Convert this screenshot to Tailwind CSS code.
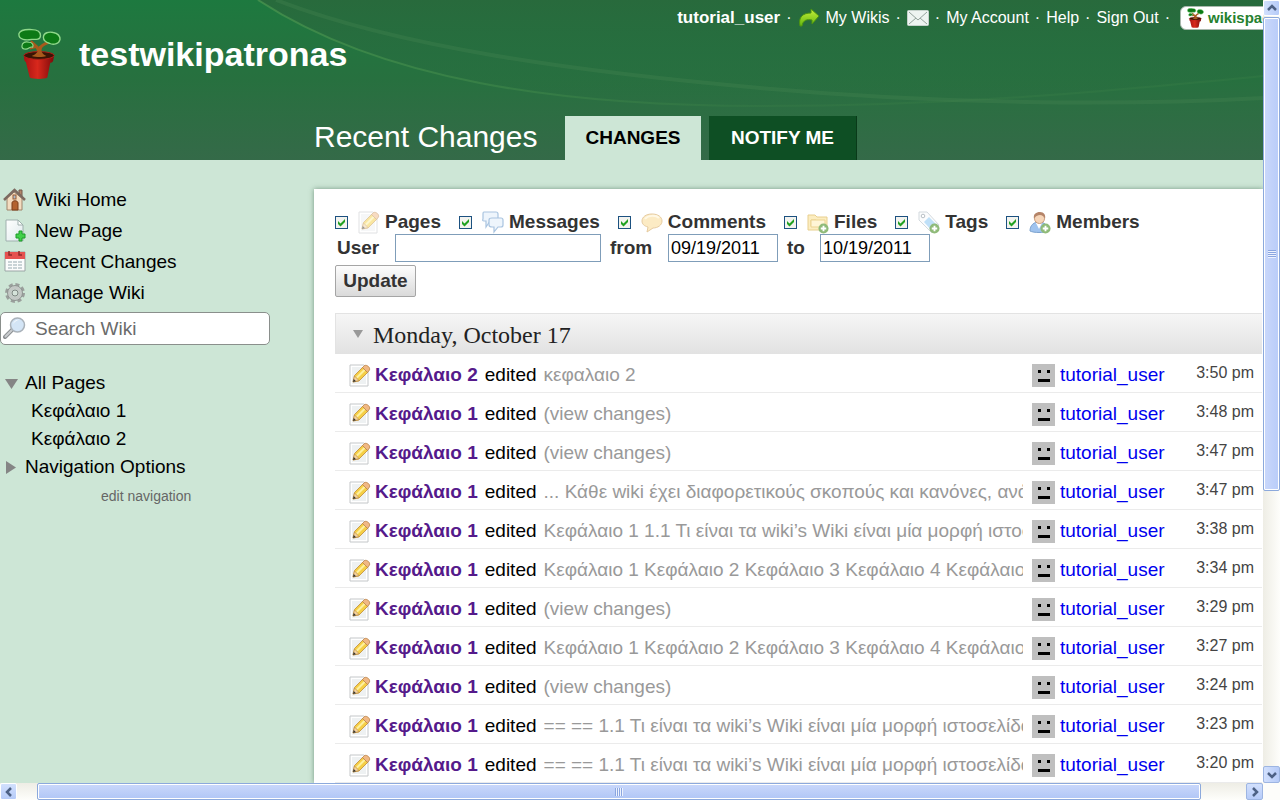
<!DOCTYPE html>
<html lang="en">
<head>
<meta charset="utf-8">
<meta name="viewport" content="width=device-width, initial-scale=1">
<title>testwikipatronas - Recent Changes</title>
<script src="https://cdn.jsdelivr.net/npm/@tailwindcss/browser@4"></script>
</head>
<body class="relative h-screen overflow-hidden bg-[#cde6d6] font-['Liberation_Sans',Arial,sans-serif] text-[19px] leading-6 text-black">

<svg class="absolute h-0 w-0" aria-hidden="true">
  <defs>
    <linearGradient id="pot" x1="0" x2="1"><stop offset="0" stop-color="#a81212"/><stop offset=".45" stop-color="#d8281c"/><stop offset="1" stop-color="#7c0a0a"/></linearGradient>
    <linearGradient id="sheet" x1="0" y1="0" x2="1" y2="1"><stop offset="0" stop-color="#fff"/><stop offset="1" stop-color="#dfe9ec"/></linearGradient>
    <linearGradient id="arrow" x1="0" y1="0" x2="0" y2="1"><stop offset="0" stop-color="#c6ee3a"/><stop offset="1" stop-color="#63b80f"/></linearGradient>
  </defs>
  <symbol id="plant" viewBox="0 0 44 52">
    <path d="M21 27c1-6-1-8-8-14M22 26c0-6 1-9 9-12M20 18l-8 2" fill="none" stroke="#a85a1c" stroke-width="3"/>
    <path d="M1 5c2-5 9-4 13-4 5 0 9 2 9 6 0 5-6 4-9 4-5 1-14 1-13-6z" fill="#0c7a16" stroke="#8fd88a" stroke-width="1.4"/>
    <path d="M26 9c0-5 6-6 10-5 5 1 7 4 7 7-1 5-7 6-11 4-3-1-6-3-6-6z" fill="#0c7a16" stroke="#8fd88a" stroke-width="1.4"/>
    <path d="M4 18c0-4 4-5 7-4 4 0 5 3 4 5-3-1-4 2-7 2-2 0-4-1-4-3z" fill="#0c7a16" stroke="#8fd88a" stroke-width="1.2"/>
    <path d="M6 27c4 4 27 4 31 0l-1 6c-1 2-2 2-3 2l-3 15c-3 2-14 2-18 0L8 34c-1 0-2-2-2-7z" fill="url(#pot)"/>
    <ellipse cx="21.500" cy="27.500" rx="15.500" ry="4" fill="#3a1505" stroke="#b02018"/>
    <path d="M21 18c0 6-2 8-7 10 4 1 10 2 15 0-4-2-6-4-5-11z" fill="#a85a1c"/>
  </symbol>
  <symbol id="pencil-page" viewBox="0 0 22 23">
    <path d="M1 1h14l4 4v17H1z" fill="#fff" stroke="#c4c7c9"/>
    <path d="M3 3h11l3 3v14H3z" fill="#eef1f2"/>
    <path d="m4 18 1.500-6.500L14 3l5 5-9 9z" fill="#f5cf45" stroke="#c08a35" stroke-width=".8"/>
    <path d="m7 13 8.500-8.500L17 6l-8.500 8.500z" fill="#fdf0a0"/>
    <path d="m4 18 1.500-6L10 16.500z" fill="#f3d2a0" stroke="#b98a45" stroke-width=".6"/>
    <path d="m13.500 3.500 2-2c2.500-1 6 2 5 4.500l-2 2.500z" fill="#f0b884" stroke="#b98045" stroke-width=".8"/>
    <path d="m4 18 .7-3 2.300 2.200z" fill="#333"/>
  </symbol>
  <symbol id="plus" viewBox="0 0 12 12"><circle cx="6" cy="6" r="5.500" fill="#8fba78"/><path d="M6 3v6M3 6h6" stroke="#fff" stroke-width="2"/></symbol>
  <symbol id="tick" viewBox="0 0 13 13"><path d="M3 5v3l2.500 2.500L10 6V3L5.500 7.500z" fill="#21a121"/></symbol>
</svg>

<div class="flex h-full flex-col">
 <div class="flex min-h-0 flex-1">
  <div class="flex min-w-0 flex-1 flex-col overflow-hidden">

   <header class="relative flex h-40 shrink-0 flex-col justify-between overflow-hidden bg-linear-to-b from-[#1d793f] via-[#27703f] to-[#346a48] text-white">
    <svg class="absolute inset-0 h-full w-full" viewBox="0 0 1263 160" preserveAspectRatio="none" aria-hidden="true">
      <defs>
        <linearGradient id="shade" x1="0" x2="0" y1="0" y2="1"><stop offset="0" stop-color="#286a3c"/><stop offset=".5" stop-color="#276d3f" stop-opacity=".8"/><stop offset="1" stop-color="#2b6d41" stop-opacity="0"/></linearGradient>
        <linearGradient id="rim" x1="0" x2="1"><stop offset="0" stop-color="#4c9850" stop-opacity=".7"/><stop offset=".5" stop-color="#3b8047" stop-opacity=".3"/><stop offset="1" stop-color="#3b8047" stop-opacity=".3"/></linearGradient>
      </defs>
      <path d="M258 0C380 80 560 106 760 106S1120 90 1263 76V0z" fill="url(#shade)"/>
      <path d="M258 0C380 80 560 106 760 106S1120 90 1263 76" fill="none" stroke="url(#rim)" stroke-width="2"/>
      <path d="M276 0C400 48 580 72 760 88S1120 106 1263 98" fill="none" stroke="#448551" stroke-opacity=".35" stroke-width="4"/>
    </svg>

    <div class="relative flex items-start pl-[18px]">
     <a href="#" class="flex shrink-0 items-center gap-[18px] pt-7 text-[34px] leading-[52px] font-bold">
      <svg class="h-[52px] w-[43px]" aria-hidden="true"><use href="#plant"/></svg>testwikipatronas
     </a>
     <nav class="-mr-[31px] flex flex-1 items-center justify-end gap-1 pt-1 text-[16px] leading-7 whitespace-nowrap" aria-label="Account">
      <a href="#" class="text-[17px] font-bold">tutorial_user</a><span class="px-0.5">·</span>
      <a href="#" class="flex items-center gap-1.5">
       <svg class="h-[22px] w-[22px]" viewBox="0 0 22 22" aria-hidden="true"><path d="M2 19C0 10 5 6 13 6V2l8 7-7 8v-4c-5-1-9 0-10 6z" fill="url(#arrow)" stroke="#4c9410"/></svg>My Wikis</a><span class="px-0.5">·</span>
      <a href="#" aria-label="Mail"><svg class="h-4 w-[22px]" viewBox="0 0 22 16" aria-hidden="true"><rect x=".5" y=".5" width="21" height="15" rx="1" fill="#eef4f1" stroke="#c6d2cc"/><path d="m2 2 9 8 9-8M2 14l7-6m11 6-7-6" fill="none" stroke="#94a39c"/></svg></a><span class="px-0.5">·</span>
      <a href="#">My Account</a><span class="px-0.5">·</span>
      <a href="#">Help</a><span class="px-0.5">·</span>
      <a href="#">Sign Out</a><span class="px-0.5">·</span>
      <a href="#" class="ml-1 flex h-6 w-[114px] items-center gap-1 rounded-md border border-[#a9b8ad] bg-white pl-1.5 text-[15px] font-bold text-[#26812f]"><svg class="h-5 w-[17px]" aria-hidden="true"><use href="#plant"/></svg>wikispaces</a>
     </nav>
    </div>

    <div class="relative flex items-end pl-[314px]">
     <h1 class="w-[251px] text-[30px] leading-[46px]">Recent Changes</h1>
     <nav class="flex gap-2 text-[19px] leading-[44px] font-bold" aria-label="Views">
      <a href="#" class="w-[136px] bg-[#cde6d6] text-center text-black">CHANGES</a>
      <a href="#" class="w-[148px] border-r border-[#093a19] bg-[#0e4f24] text-center">NOTIFY ME</a>
     </nav>
    </div>
   </header>

   <div class="flex min-h-0 flex-1">
    <aside class="w-[314px] shrink-0 pt-6">
     <nav aria-label="Wiki">
      <a href="#" class="flex h-[31px] items-center gap-[9px] pl-[3px]">
       <svg class="h-[23px] w-[23px]" viewBox="0 0 23 23" aria-hidden="true"><path d="M4 10 11 4l8 6v12H4z" fill="#f3dcc0" stroke="#a0846a"/><path d="M16 2h3v6l-3-2z" fill="#b3856a" stroke="#75594a"/><path d="m1 12 10.500-10L22 12" fill="none" stroke="#7d6a60" stroke-width="2.500"/><path d="M9 22v-7c0-3 6-3 6 0v7z" fill="#b4622e" stroke="#7b3f1b"/><rect x="10" y="7" width="3" height="4" fill="#a7bacb" stroke="#9c5b33"/></svg>Wiki Home</a>
      <a href="#" class="flex h-[31px] items-center gap-[9px] pl-[3px]">
       <svg class="h-[23px] w-[23px]" viewBox="0 0 23 23" aria-hidden="true"><path d="M3 1h12l5 5v16H3z" fill="url(#sheet)" stroke="#9fb0ae"/><path d="M15 1v5h5z" fill="#fff" stroke="#9fb0ae"/><path d="M16 12h3v3h3v4h-3v3h-3v-3h-3v-4h3z" fill="#42d04a" stroke="#1c9c28"/></svg>New Page</a>
      <a href="#" class="flex h-[31px] items-center gap-[9px] pl-[3px]">
       <svg class="h-[23px] w-[23px]" viewBox="0 0 23 23" aria-hidden="true"><path d="M2 2h20v19H2z" fill="#fbfcfc" stroke="#9aa5a5"/><path d="M2 2h20v7H2z" fill="#e65150"/><path d="M6 1v4h3M16 1v4h3" fill="none" stroke="#8f2b2b" stroke-width="1.500"/><g fill="#c9d3d6"><path d="M5 11h4v2H5zM10 11h4v2h-4zM15 11h4v2h-4zM5 14h4v2H5zM10 14h4v2h-4zM15 14h4v2h-4zM5 17h4v2H5zM10 17h4v2h-4zM15 17h4v2h-4z"/></g></svg>Recent Changes</a>
      <a href="#" class="flex h-[31px] items-center gap-[9px] pl-[3px]">
       <svg class="h-[23px] w-[23px]" viewBox="0 0 23 23" aria-hidden="true"><circle cx="12" cy="12" r="8.500" fill="none" stroke="#9a9f9c" stroke-width="3" stroke-dasharray="4 2.700"/><circle cx="12" cy="12" r="5.500" fill="none" stroke="#c3c8c5" stroke-width="4"/><circle cx="12" cy="12" r="7.500" fill="none" stroke="#8f9592"/><circle cx="12" cy="12" r="3" fill="#d5e3da" stroke="#7f8582"/></svg>Manage Wiki</a>
     </nav>
     <form class="mt-1 flex h-[33px] w-[270px] items-center rounded-[5px] border border-[#8a8f8c] bg-white pl-[2px]">
      <svg class="h-[23px] w-[23px] shrink-0" viewBox="0 0 23 23" aria-hidden="true"><path d="m2 20 8-8" stroke="#8c8f92" stroke-width="4" stroke-linecap="round"/><path d="m2.500 19.500 7-7" stroke="#c9cccf" stroke-width="2" stroke-linecap="round"/><circle cx="14.500" cy="8" r="7" fill="#d4e5f6" stroke="#aab2ba" stroke-width="1.500"/><path d="M10 7c1-4 5-5 7-4-4 0-5 2-7 4z" fill="#fff"/></svg>
      <input type="search" aria-label="Search Wiki" placeholder="Search Wiki" class="ml-[9px] min-w-0 flex-1 outline-none placeholder:text-[#6b6b6b]">
     </form>

     <nav class="mt-6 leading-7" aria-label="Pages">
      <a href="#" class="flex items-center gap-[7px] pl-[5px]"><svg class="h-[13px] w-[13px]" viewBox="0 0 13 13" aria-hidden="true"><path d="M0 2h13L6.500 12z" fill="#858585"/></svg>All Pages</a>
      <a href="#" class="block pl-[31px]">Κεφάλαιο 1</a>
      <a href="#" class="block pl-[31px]">Κεφάλαιο 2</a>
      <a href="#" class="flex items-center gap-[7px] pl-[5px]"><svg class="h-[13px] w-[13px]" viewBox="0 0 13 13" aria-hidden="true"><path d="M1 0v13l10-6.500z" fill="#858585"/></svg>Navigation Options</a>
      <a href="#" class="block pt-px pl-[101px] text-[14px] text-[#666]">edit navigation</a>
     </nav>
    </aside>

    <main class="mt-[29px] min-w-0 flex-1 bg-white pr-px pl-[21px] shadow-[0_0_5px_rgba(60,100,75,0.6)]">
     <form class="pt-[21px] font-bold text-[#333]">
      <div class="flex h-6 items-center gap-[18px] whitespace-nowrap">
       <label class="flex items-center gap-[5px]"><span class="mr-[5px] grid"><input type="checkbox" checked class="col-start-1 row-start-1 h-[13px] w-[13px] appearance-none border border-[#1c5180] bg-[#f3f3ef]"><svg class="pointer-events-none col-start-1 row-start-1 h-[13px] w-[13px]"><use href="#tick"/></svg></span>
        <svg class="h-[23px] w-[22px] opacity-50" aria-hidden="true"><use href="#pencil-page"/></svg>Pages</label>
       <label class="flex items-center gap-[5px]"><span class="mr-[5px] grid"><input type="checkbox" checked class="col-start-1 row-start-1 h-[13px] w-[13px] appearance-none border border-[#1c5180] bg-[#f3f3ef]"><svg class="pointer-events-none col-start-1 row-start-1 h-[13px] w-[13px]"><use href="#tick"/></svg></span>
        <svg class="h-[23px] w-[22px]" viewBox="0 0 22 23" fill="#eef5fc" stroke="#a9c4e0" stroke-width="1.200" aria-hidden="true"><path d="M2 1h12q2 0 2 2v5q0 2-2 2H8l-4 6V10H2Q0 10 1 8V3q0-2 1-2z"/><path d="M10 7h9q2 0 2 2v5q0 2-2 2h-3l-4 5v-5h-2q-3 0-3-2V9q0-2 3-2z"/></svg>Messages</label>
       <label class="flex items-center gap-[5px]"><span class="mr-[5px] grid"><input type="checkbox" checked class="col-start-1 row-start-1 h-[13px] w-[13px] appearance-none border border-[#1c5180] bg-[#f3f3ef]"><svg class="pointer-events-none col-start-1 row-start-1 h-[13px] w-[13px]"><use href="#tick"/></svg></span>
        <svg class="h-[23px] w-[22px]" viewBox="0 0 22 23" aria-hidden="true"><path d="M11 3c6 0 10 3 10 7s-4 7-9 7l-6 4 1-5c-4-1-6-3-6-6 0-4 4-7 10-7z" fill="#fcebc4" stroke="#e6cba0"/><path d="M4 8c3-4 11-4 14-1" fill="none" stroke="#fff8e5" stroke-width="2"/></svg>Comments</label>
       <label class="flex items-center gap-[5px]"><span class="mr-[5px] grid"><input type="checkbox" checked class="col-start-1 row-start-1 h-[13px] w-[13px] appearance-none border border-[#1c5180] bg-[#f3f3ef]"><svg class="pointer-events-none col-start-1 row-start-1 h-[13px] w-[13px]"><use href="#tick"/></svg></span>
        <svg class="h-[23px] w-[22px]" viewBox="0 0 22 23" aria-hidden="true"><path d="M1 19V4h7l2 2h10v13z" fill="#fcedc0" stroke="#e8cf8e"/><path d="M4 15V9h5l1 2h8" fill="none" stroke="#ebd391"/><path d="M4 9h14v7H4z" fill="#fff5d6" stroke="#ebd391"/><use href="#plus" x="11" y="12" width="11" height="11"/></svg>Files</label>
       <label class="flex items-center gap-[5px]"><span class="mr-[5px] grid"><input type="checkbox" checked class="col-start-1 row-start-1 h-[13px] w-[13px] appearance-none border border-[#1c5180] bg-[#f3f3ef]"><svg class="pointer-events-none col-start-1 row-start-1 h-[13px] w-[13px]"><use href="#tick"/></svg></span>
        <svg class="h-[23px] w-[22px]" viewBox="0 0 22 23" aria-hidden="true"><path d="M1 1h8l12 13-7 8L1 9z" fill="#fbfcfd" stroke="#d3d9de"/><path d="m6 11 5-5 8 8-5 6z" fill="#bfe0f8"/><circle cx="5" cy="5" r="1.800" fill="#fff" stroke="#b8bfc5"/><use href="#plus" x="11" y="12" width="11" height="11"/></svg>Tags</label>
       <label class="flex items-center gap-[5px]"><span class="mr-[5px] grid"><input type="checkbox" checked class="col-start-1 row-start-1 h-[13px] w-[13px] appearance-none border border-[#1c5180] bg-[#f3f3ef]"><svg class="pointer-events-none col-start-1 row-start-1 h-[13px] w-[13px]"><use href="#tick"/></svg></span>
        <svg class="h-[23px] w-[22px]" viewBox="0 0 22 23" aria-hidden="true"><path d="M1 20c0-6 4-9 9-9s9 3 9 9c-4 2-14 2-18 0z" fill="#9fc3ee" stroke="#7da3cf"/><path d="M7 12h6l-3 6z" fill="#fff"/><circle cx="10.500" cy="7.500" r="5" fill="#f6d5b8" stroke="#c99b7b"/><path d="M5 8c-1-5 2-7 6-7s6 3 5 7c-1-3-3-4-5-4S6 5 5 8z" fill="#b58468"/><use href="#plus" x="11" y="12" width="11" height="11"/></svg>Members</label>
      </div>
      <div class="flex h-7 items-center pl-[2px]">
       <label for="user" class="w-[58px]">User</label>
       <input id="user" type="text" class="h-7 w-[206px] border border-[#7f9db9] bg-white px-0.5 text-[18px] font-normal text-black">
       <label for="from" class="w-[67px] pl-[9px]">from</label>
       <input id="from" type="text" value="09/19/2011" class="h-7 w-[110px] border border-[#7f9db9] bg-white px-0.5 text-[18px] font-normal text-black">
       <label for="to" class="w-[42px] pl-[9px]">to</label>
       <input id="to" type="text" value="10/19/2011" class="h-7 w-[110px] border border-[#7f9db9] bg-white px-0.5 text-[18px] font-normal text-black">
      </div>
      <button type="button" class="mt-[3px] block h-8 w-[81px] rounded-[2px] border border-[#a5a5a5] bg-linear-to-b from-[#fdfdfd] to-[#dadada]">Update</button>
     </form>

     <h2 class="mt-4 flex h-[41px] items-center gap-[9px] border-t border-l border-[#e3e3e3] bg-linear-to-b from-[#f6f6f6] to-[#e2e2e2] pt-0.5 pl-4 font-['Liberation_Serif',serif] text-[24px] text-[#222]">
      <svg class="h-3 w-3" viewBox="0 0 12 12" aria-hidden="true"><path d="M1 1h10L6 9z" fill="#999"/></svg>Monday, October 17</h2>

     <table class="w-full table-fixed border-separate border-spacing-0">
      <colgroup><col><col class="w-[145px]"><col class="w-[94px]"></colgroup>
      <tbody id="changes"></tbody>
     </table>
    </main>
   </div>
  </div>

  <div class="flex w-[17px] shrink-0 flex-col bg-linear-to-r from-[#eeede5] to-[#fefefb]">
   <button type="button" aria-label="Scroll up" class="grid h-4 place-items-center rounded-[2px] border border-white bg-linear-to-r from-[#d2e0fd] to-[#b6cbf8]"><svg class="h-2 w-3" viewBox="0 0 12 8"><path d="m2 6 4-4 4 4" fill="none" stroke="#4d6185" stroke-width="2.500"/></svg></button>
   <div class="mt-px grid h-[474px] place-items-center rounded-[2px] border border-[#8ca9dc] bg-linear-to-r from-[#cad8fb] to-[#b8ccf9] ring-1 ring-white ring-inset"><span class="h-2 w-2 bg-[repeating-linear-gradient(#8ba6e0_0_1px,#eef3fe_1px_2px)]"></span></div>
   <div class="flex-1"></div>
   <button type="button" aria-label="Scroll down" class="grid h-[17px] place-items-center rounded-[2px] border border-[#9db5e2] bg-linear-to-r from-[#d2e0fd] to-[#b6cbf8]"><svg class="h-2 w-3" viewBox="0 0 12 8"><path d="m2 2 4 4 4-4" fill="none" stroke="#4d6185" stroke-width="2.500"/></svg></button>
  </div>
 </div>

 <div class="flex h-[17px] shrink-0 bg-linear-to-b from-[#eeede5] to-[#fefefb]">
  <button type="button" aria-label="Scroll left" class="grid w-[17px] place-items-center rounded-[2px] border border-white bg-linear-to-b from-[#d2e0fd] to-[#b6cbf8]"><svg class="h-3 w-2" viewBox="0 0 8 12"><path d="M6 2 2 6l4 4" fill="none" stroke="#4d6185" stroke-width="2.500"/></svg></button>
  <div class="w-5"></div>
  <div class="grid flex-1 place-items-center rounded-[2px] border border-[#8ca9dc] bg-linear-to-b from-[#cad8fb] to-[#b0c6f6] ring-1 ring-white ring-inset"><span class="h-2 w-2 bg-[repeating-linear-gradient(90deg,#8ba6e0_0_1px,#eef3fe_1px_2px)]"></span></div>
  <div class="w-[45px]"></div>
  <button type="button" aria-label="Scroll right" class="grid w-[17px] place-items-center rounded-[2px] border border-[#9db5e2] bg-linear-to-b from-[#d2e0fd] to-[#b6cbf8]"><svg class="h-3 w-2" viewBox="0 0 8 12"><path d="m2 2 4 4-4 4" fill="none" stroke="#4d6185" stroke-width="2.500"/></svg></button>
  <div class="w-[17px] bg-[#fdfdfa]"></div>
 </div>
</div>

<script>
const chapters = 'Κεφάλαιο 1 Κεφάλαιο 2 Κεφάλαιο 3 Κεφάλαιο 4 Κεφάλαιο 5';
const wikiIntro = '== == 1.1 Τι είναι τα wiki’s Wiki είναι μία μορφή ιστοσελίδας';
const changes = [
  ['Κεφάλαιο 2', 'κεφαλαιο 2', '3:50 pm'],
  ['Κεφάλαιο 1', '(view changes)', '3:48 pm'],
  ['Κεφάλαιο 1', '(view changes)', '3:47 pm'],
  ['Κεφάλαιο 1', '... Κάθε wiki έχει διαφορετικούς σκοπούς και κανόνες, ανάλογα', '3:47 pm'],
  ['Κεφάλαιο 1', 'Κεφάλαιο 1 1.1 Τι είναι τα wiki’s Wiki είναι μία μορφή ιστοσελίδας', '3:38 pm'],
  ['Κεφάλαιο 1', chapters, '3:34 pm'],
  ['Κεφάλαιο 1', '(view changes)', '3:29 pm'],
  ['Κεφάλαιο 1', chapters, '3:27 pm'],
  ['Κεφάλαιο 1', '(view changes)', '3:24 pm'],
  ['Κεφάλαιο 1', wikiIntro, '3:23 pm'],
  ['Κεφάλαιο 1', wikiIntro, '3:20 pm']
];
document.getElementById('changes').innerHTML = changes.map(([page, note, time]) => `
<tr class="h-[39px]">
 <td class="border-b border-[#ebebeb] p-0 pl-[14px]"><div class="flex items-center gap-1 overflow-hidden pt-1 whitespace-nowrap">
  <svg class="h-[23px] w-[22px] shrink-0" aria-hidden="true"><use href="#pencil-page"/></svg>
  <div class="flex min-w-0 flex-1 gap-[7px]"><a href="#" class="font-bold text-[#551a8b]">${page}</a><span>edited</span><a href="#" class="min-w-0 flex-1 overflow-hidden text-[#999]">${note}</a></div></div></td>
 <td class="border-b border-[#ebebeb] p-0 pl-[9px]"><a href="#" class="flex items-center gap-[5px] pt-1 text-[#0000ee]">
  <svg class="h-[23px] w-[23px] shrink-0" viewBox="0 0 23 23" aria-hidden="true"><path d="M0 0h23v23H0z" fill="#bfbfbf"/><path d="M6 6h3v3H6zM15 6h3v3h-3zM6 15h12v3H6z" fill="#000"/></svg>tutorial_user</a></td>
 <td class="border-b border-[#ebebeb] p-0 pr-2 text-right text-[16px] text-[#444]">${time}</td>
</tr>`).join('');
</script>
</body>
</html>
